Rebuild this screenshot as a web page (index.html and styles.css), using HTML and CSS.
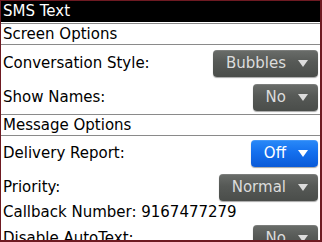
FILE: index.html
```html
<!DOCTYPE html>
<html lang="en">
<head>
    <meta charset="UTF-8">
    <title>SMS Text</title>
    <link rel="stylesheet" href="styles.css">
</head>
<body>
    <div class="screen">
        <div class="title">SMS Text</div>

        <div class="section">Screen Options</div>
        <div class="row first">
            <span>Conversation Style:</span>
            <button class="choice">Bubbles <i class="arrow"></i></button>
        </div>
        <div class="row">
            <span>Show Names:</span>
            <button class="choice">No <i class="arrow"></i></button>
        </div>

        <div class="section">Message Options</div>
        <div class="row">
            <span>Delivery Report:</span>
            <button class="choice focused">Off <i class="arrow"></i></button>
        </div>
        <div class="row">
            <span>Priority:</span>
            <button class="choice">Normal <i class="arrow"></i></button>
        </div>
        <div class="text-row">Callback Number: 9167477279</div>
        <div class="row">
            <span>Disable AutoText:</span>
            <button class="choice">No <i class="arrow"></i></button>
        </div>
    </div>
</body>
</html>
```

FILE: styles.css
```css
html, body {
    margin: 0;
    height: 100%;
    background-color: #6e1a22;
    font-family: "DejaVu Sans", sans-serif;
    font-size: 15px;
    color: #000;
}

.screen {
    margin: 1px 2px 0 1px;
    height: 239px;
    background-color: #fff;
    overflow: hidden;
}

.title {
    height: 21px;
    line-height: 21px;
    padding-left: 2px;
    background-color: #000;
    color: #fff;
    border-bottom: 1px solid #fff;
}

.section {
    height: 20px;
    line-height: 20px;
    padding-left: 2px;
    border-top: 1px solid #8a8a8a;
    border-bottom: 1px solid #8a8a8a;
}

.section + .row {
    height: 34px;
}

.row {
    display: flex;
    align-items: center;
    justify-content: space-between;
    height: 34px;
    padding: 0 2px;
}

.row.first {
    padding-top: 1px;
}

.text-row {
    height: 17px;
    line-height: 17px;
    padding-left: 2px;
}

.choice {
    display: flex;
    align-items: center;
    gap: 12px;
    height: 27px;
    padding: 0 10px 0 13px;
    border: none;
    border-radius: 4px;
    background: linear-gradient(#6a6d6a, #565956 45%, #4a4d4a);
    box-shadow: inset 0 1px 0 rgba(255, 255, 255, 0.12), 0 1px 1px rgba(0, 0, 0, 0.35);
    color: #dcdcdc;
    font-family: "DejaVu Sans", sans-serif;
    font-size: 15px;
}

.choice.focused {
    background: linear-gradient(#2a8af8, #1470ee 45%, #0a5ad8);
    color: #fff;
}

.arrow {
    width: 0;
    height: 0;
    border-left: 5px solid transparent;
    border-right: 5px solid transparent;
    border-top: 7px solid currentColor;
}
```
